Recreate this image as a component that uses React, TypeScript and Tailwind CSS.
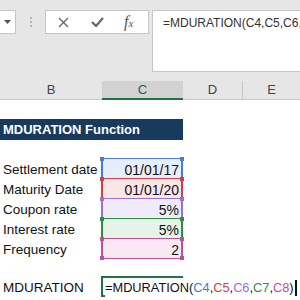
import React from 'react';

const rows = [
  { label: 'Settlement date', value: '01/01/17', line: 'border-[#4a7bd0]', fill: 'bg-[#e8eef9]', dot: 'bg-[#4a7bd0]' },
  { label: 'Maturity Date', value: '01/01/20', line: 'border-[#cf3f46]', fill: 'bg-[#f9e6e7]', dot: 'bg-[#cf3f46]' },
  { label: 'Coupon rate', value: '5%', line: 'border-[#9b6fd4]', fill: 'bg-[#f0ebfa]', dot: 'bg-[#9b6fd4]' },
  { label: 'Interest rate', value: '5%', line: 'border-[#2a8f3e]', fill: 'bg-[#e6f3e8]', dot: 'bg-[#2a8f3e]' },
  { label: 'Frequency', value: '2', line: 'border-[#bf4f98]', fill: 'bg-[#f9e9f3]', dot: 'bg-[#bf4f98]' },
];

function Handle({ cls, pos }: { cls: string; pos: string }) {
  return <span className={`absolute w-[4px] h-[4px] ${cls} ${pos}`} />;
}

export default function App() {
  return (
    <div className="w-[300px] h-[300px] overflow-hidden bg-white text-[13.5px] text-[#111]" style={{ fontFamily: '"Liberation Sans", Arial, sans-serif' }}>
      {/* formula bar */}
      <div className="h-[81px] bg-[#e6e6e6] flex items-start pt-[10px]">
        <div className="w-[16px] h-[24px] bg-white border border-l-0 border-[#c6c6c6] flex items-center justify-center">
          <svg width="7" height="4" viewBox="0 0 7 4"><path d="M0 0h7L3.5 4z" fill="#555" /></svg>
        </div>
        <div className="ml-[12px] w-[5px] h-[24px] flex flex-col items-center justify-center gap-[2px]">
          <span className="w-[2px] h-[2px] bg-[#b5b5b5]" />
          <span className="w-[2px] h-[2px] bg-[#b5b5b5]" />
          <span className="w-[2px] h-[2px] bg-[#b5b5b5]" />
        </div>
        <div className="ml-[12px] w-[104px] h-[24px] bg-white border border-[#c6c6c6] flex items-center">
          <svg className="ml-[12px]" width="11" height="11" viewBox="0 0 11 11"><path d="M1 1l9 9M10 1l-9 9" stroke="#666" strokeWidth="1.4" /></svg>
          <svg className="ml-[22px]" width="13" height="10" viewBox="0 0 13 10"><path d="M1 5l4 4 7-8" stroke="#666" strokeWidth="2.2" fill="none" /></svg>
          <span className="ml-[20px] italic text-[#555] text-[16px] leading-none" style={{ fontFamily: '"Liberation Serif", serif' }}>f<span className="text-[11px]">x</span></span>
        </div>
        <div className="ml-[3px] flex-1 h-[62px] bg-white border border-r-0 border-[#c6c6c6] pl-[10px] pt-[3px] whitespace-nowrap overflow-hidden text-[12px] text-[#333]">
          =MDURATION(C4,C5,C6,C7,C8)
        </div>
      </div>

      {/* column headers */}
      <div className="h-[19px] flex bg-[#e6e6e6] text-[13px] text-[#444] leading-[18px]">
        <div className="w-[102px] text-center border-b border-[#c6c6c6]">B</div>
        <div className="w-[81px] text-center bg-[#d2d2d2] border-b-2 border-[#217346] text-[#2b5d41]">C</div>
        <div className="w-[60px] text-center border-b border-r border-[#c6c6c6]">D</div>
        <div className="flex-1 text-center border-b border-[#c6c6c6]">E</div>
      </div>

      <div className="h-[19px]" />
      <div className="w-[183px] h-[21px] bg-[#183a5f] text-white font-bold text-[13px] pl-[3px] leading-[22px]">MDURATION Function</div>
      <div className="h-[18px]" />

      {rows.map((r, i) => (
        <div key={r.label} className="flex h-[20px]">
          <div className="w-[101px] pl-[3px] leading-[23px] whitespace-nowrap">{r.label}</div>
          <div className={`relative w-[82px] ${r.fill} border-t border-x-2 ${r.line} ${i === rows.length - 1 ? 'border-b h-[21px]' : ''} text-right text-[14px] pr-[2px] leading-[22px]`}>
            {r.value}
            <Handle cls={r.dot} pos="-left-[3px] -top-[2px]" />
            <Handle cls={r.dot} pos="-right-[3px] -top-[2px]" />
            {i === rows.length - 1 && (
              <>
                <Handle cls={r.dot} pos="-left-[3px] -bottom-[2px]" />
                <Handle cls={r.dot} pos="-right-[3px] -bottom-[2px]" />
              </>
            )}
          </div>
        </div>
      ))}

      <div className="h-[18px]" />
      <div className="flex h-[21px]">
        <div className="w-[101px] pl-[3px] leading-[23px]">MDURATION</div>
        <div className="relative w-[82px] border-2 border-r-0 border-[#217346]">
          <div className="absolute left-[2px] top-0 bg-white whitespace-nowrap leading-[20px] text-[12.8px] flex items-center">
            <span>=MDURATION(</span>
            <span className="text-[#4a7bd0]">C4</span>,
            <span className="text-[#cf3f46]">C5</span>,
            <span className="text-[#9b6fd4]">C6</span>,
            <span className="text-[#2a8f3e]">C7</span>,
            <span className="text-[#bf4f98]">C8</span>
            <span>)</span>
            <span className="ml-[1px] w-[2px] h-[16px] bg-[#111]" />
          </div>
        </div>
      </div>
    </div>
  );
}
